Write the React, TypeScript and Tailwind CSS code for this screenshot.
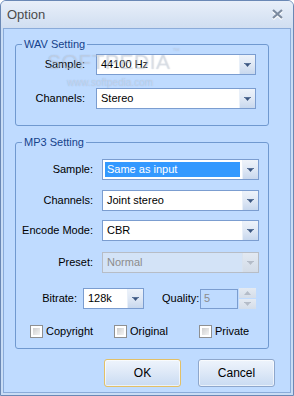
import clsx from "clsx";

// Option dialog - Office 2007 blue style

function Arrow({ disabled }: { disabled?: boolean }) {
  return (
    <svg width="7" height="5" viewBox="0 0 7 5">
      <rect x="0" y="0" width="7" height="1" fill={disabled ? "#b4bcc8" : "#5a7399"} />
      <polygon points="1,1 6,1 3.5,4" fill={disabled ? "#b4bcc8" : "#3c5680"} />
    </svg>
  );
}

function DropButton({ disabled }: { disabled?: boolean }) {
  return (
    <div
      className={clsx(
        "w-[16px] h-full flex items-center justify-center pt-[1px] border-l",
        disabled
          ? "border-[#d8e2ee] bg-linear-to-b from-[#e2e9f2] to-[#d3dce8]"
          : "border-[#e9f0f9] bg-linear-to-b from-[#eef3fa] via-[#dfe8f5] to-[#c8d8ee]"
      )}
    >
      <Arrow disabled={disabled} />
    </div>
  );
}

function Combo({
  value,
  className,
  selected,
  disabled,
}: {
  value: string;
  className?: string;
  selected?: boolean;
  disabled?: boolean;
}) {
  return (
    <div
      className={clsx(
        "flex h-[21px] border",
        disabled ? "border-[#b7bdc6] bg-[#d3e3f7]" : "border-[#7b9dd0] bg-white",
        className
      )}
    >
      <div className="flex-1 min-w-0 p-[2px]">
        <div
          className={clsx(
            "h-full flex items-center pl-[2px]",
            selected && "bg-[#3399ff] text-white",
            disabled && "text-[#8c8c8c]"
          )}
        >
          {value}
        </div>
      </div>
      <DropButton disabled={disabled} />
    </div>
  );
}

function Checkbox({ label, className }: { label: string; className?: string }) {
  return (
    <label className={clsx("flex items-center gap-[3px]", className)}>
      <span className="w-[13px] h-[13px] border border-[#8f9091] bg-white p-[2px] shrink-0">
        <span className="block w-full h-full bg-linear-to-br from-[#cfcfcf] to-[#f4f4f4]" />
      </span>
      <span>{label}</span>
    </label>
  );
}

function Button({ label, def }: { label: string; def?: boolean }) {
  return (
    <button
      className={clsx(
        "w-[77px] h-[28px] rounded-[3px] border bg-linear-to-b from-[#eef4fc] via-[#dde8f7] to-[#c9dbf2] text-[12px] text-black shadow-[inset_0_0_0_1px_rgba(255,255,255,0.6)]",
        def ? "border-[#e2c067]" : "border-[#8ea7cc]"
      )}
    >
      {label}
    </button>
  );
}

export default function App() {
  return (
    <div className="w-[294px] h-[396px] flex flex-col rounded-t-[6px] border border-[#6a88b5] bg-[#c9ddf5] font-['Liberation_Sans',Arial,sans-serif] text-[11px] text-black select-none">
      {/* Title bar */}
      <div className="h-[27px] flex items-center justify-between pl-[6px] pr-[9px] rounded-t-[5px] bg-linear-to-b from-[#e8eff9] to-[#d0def1]">
        <span className="text-[13px] text-[#4b4b4b]">Option</span>
        <svg width="13" height="11" viewBox="0 0 13 11">
          <path d="M2 2 L11 10 M11 2 L2 10" stroke="#ffffff" strokeWidth="2.6" />
          <path d="M2 1 L11 9 M11 1 L2 9" stroke="#7c8ba0" strokeWidth="2.2" />
        </svg>
      </div>

      {/* Body */}
      <div className="relative mx-[2px] mb-[2px] flex-1 border border-[#8aabd9] bg-[#bfdbff] pl-[11px] pt-[8px] flex flex-col">
        {/* watermark */}
        <div className="absolute left-[43px] top-[17px] text-[21px] tracking-[0.5px] text-white/30 [text-shadow:0_0_1px_rgba(90,110,140,0.35)] pointer-events-none">
          SOFTPEDIA<span className="text-[7px] align-top ml-[2px]">™</span>
        </div>
        <div className="absolute left-[63px] top-[46px] text-[10px] text-white/30 [text-shadow:0_0_1px_rgba(90,110,140,0.35)] pointer-events-none">
          www.softpedia.com
        </div>

        {/* WAV Setting */}
        <fieldset className="w-[254px] rounded-[3px] border border-[#7099d0] pb-[16px]">
          <legend className="ml-[6px] px-[2px] leading-[14px] text-[#15428b]">WAV Setting</legend>
          <div className="mt-[3px] flex items-center">
            <span className="w-[69px] text-right">Sample:</span>
            <Combo value="44100 Hz" className="ml-[11px] w-[160px]" />
          </div>
          <div className="mt-[13px] flex items-center">
            <span className="w-[69px] text-right">Channels:</span>
            <Combo value="Stereo" className="ml-[11px] w-[160px]" />
          </div>
        </fieldset>

        {/* MP3 Setting */}
        <fieldset className="mt-[9px] w-[254px] rounded-[3px] border border-[#7099d0] pb-[8px]">
          <legend className="ml-[6px] px-[2px] leading-[14px] text-[#15428b]">MP3 Setting</legend>
          <div className="mt-[10px] flex items-center">
            <span className="w-[77px] text-right">Sample:</span>
            <Combo value="Same as input" selected className="ml-[9px] w-[157px]" />
          </div>
          <div className="mt-[10px] flex items-center">
            <span className="w-[77px] text-right">Channels:</span>
            <Combo value="Joint stereo" className="ml-[9px] w-[157px]" />
          </div>
          <div className="mt-[9px] flex items-center">
            <span className="w-[77px] text-right">Encode Mode:</span>
            <Combo value="CBR" className="ml-[9px] w-[157px]" />
          </div>
          <div className="mt-[11px] flex items-center">
            <span className="w-[77px] text-right">Preset:</span>
            <Combo value="Normal" disabled className="ml-[9px] w-[157px]" />
          </div>
          <div className="mt-[15px] flex items-center">
            <span className="w-[61px] text-right">Bitrate:</span>
            <Combo value="128k" className="ml-[6px] w-[61px]" />
            <span className="ml-[18px] w-[38px] whitespace-nowrap">Quality:</span>
            <div className="w-[38px] h-[20px] border border-[#7b9dd0] flex items-center pl-[3px] text-[#8c8c8c]">
              5
            </div>
            <div className="ml-[1px] w-[17px] h-[21px] flex flex-col gap-[1px]">
              <div className="flex-1 flex items-center justify-center bg-linear-to-b from-[#e4eaf2] to-[#d4dde9]">
                <svg width="7" height="4" viewBox="0 0 7 4">
                  <polygon points="0,4 7,4 3.5,0" fill="#b4bcc8" />
                </svg>
              </div>
              <div className="flex-1 flex items-center justify-center bg-linear-to-b from-[#e4eaf2] to-[#d4dde9]">
                <Arrow disabled />
              </div>
            </div>
          </div>
          <div className="mt-[14px] flex items-center pl-[14px]">
            <Checkbox label="Copyright" className="w-[84px]" />
            <Checkbox label="Original" className="w-[85px]" />
            <Checkbox label="Private" />
          </div>
        </fieldset>

        {/* Buttons */}
        <div className="mt-[10px] flex gap-[17px] pl-[89px]">
          <Button label="OK" def />
          <Button label="Cancel" />
        </div>
      </div>
    </div>
  );
}
